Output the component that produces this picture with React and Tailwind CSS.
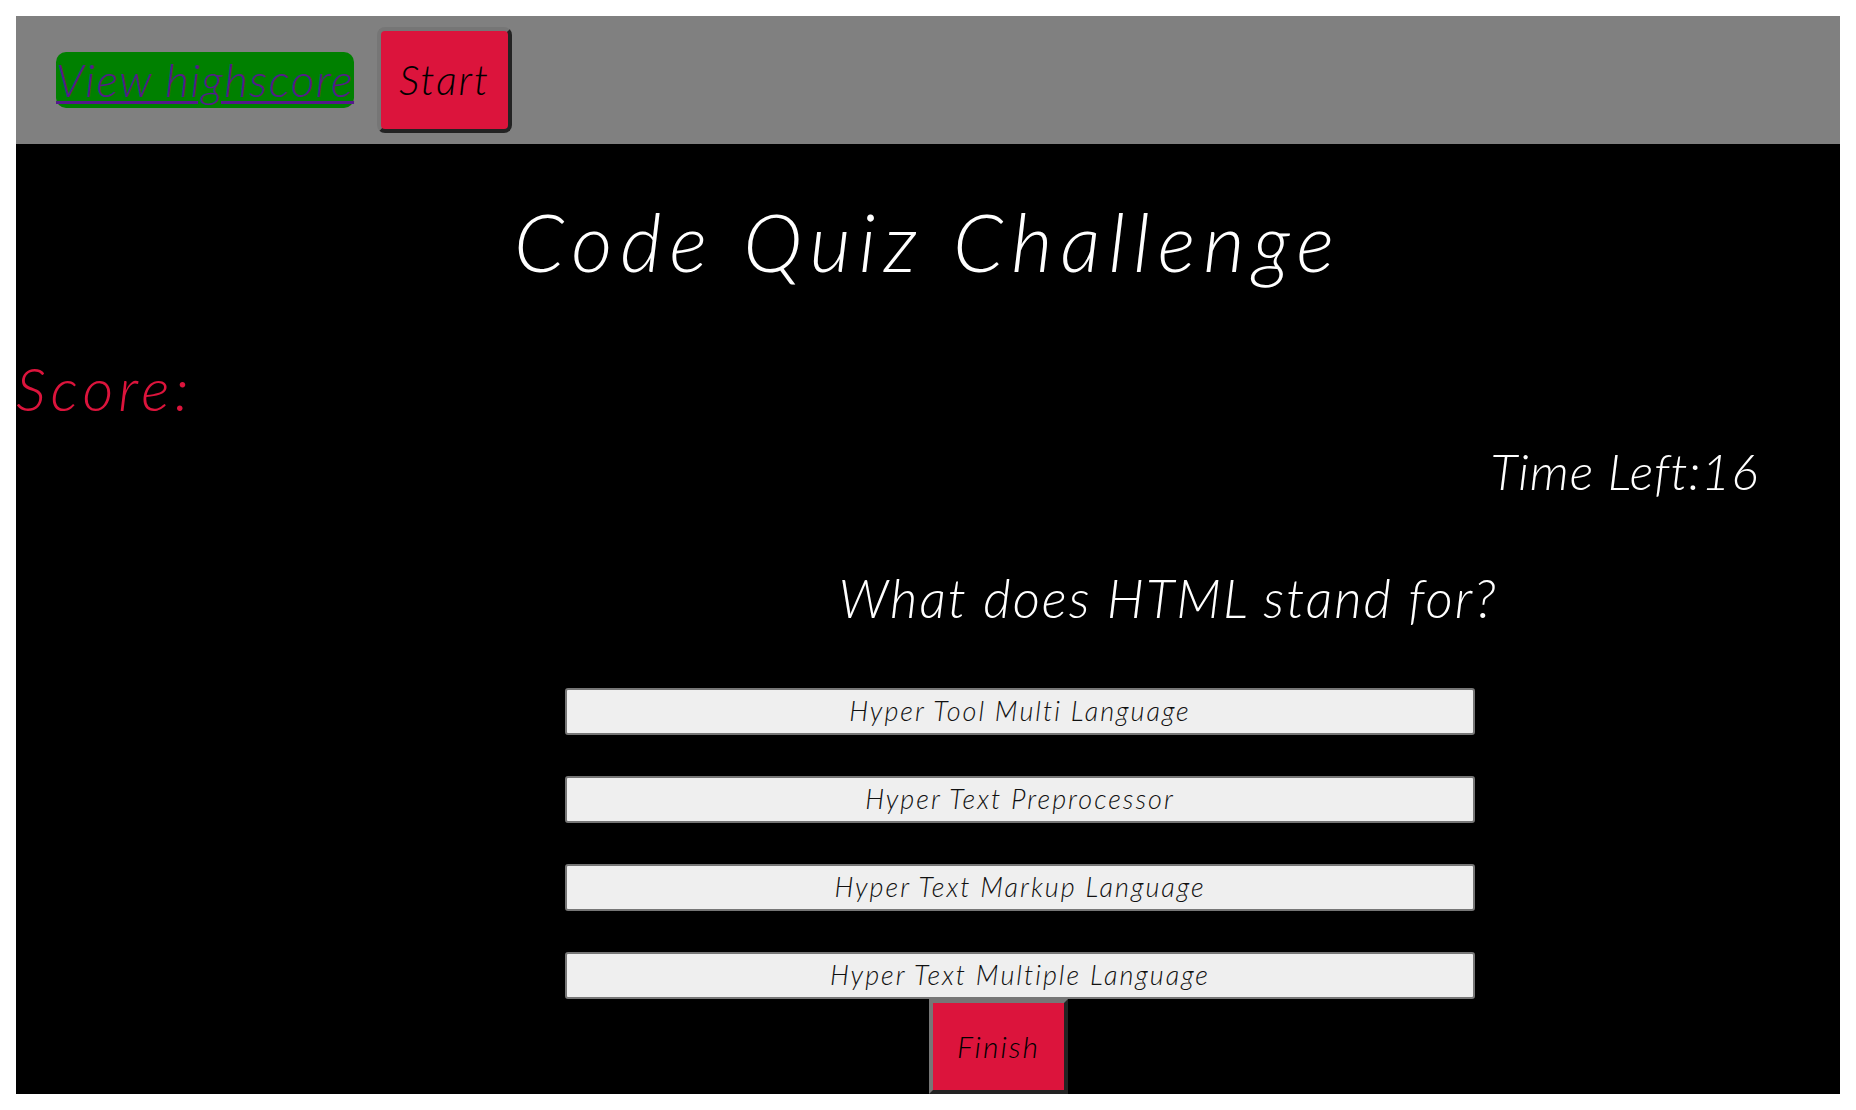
import { useState } from "react";

const answers = [
  "Hyper Tool Multi Language",
  "Hyper Text Preprocessor",
  "Hyper Text Markup Language",
  "Hyper Text Multiple Language",
];

function App() {
  const [timeLeft] = useState(16);

  return (
    <div className="bg-white p-4 font-['Lato',sans-serif] font-light italic">
      {/* Header bar */}
      <header className="h-[128px] bg-[#808080] flex items-center pl-10 gap-[23px]">
        <a
          href="#"
          className="h-[56px] w-[298px] flex items-center bg-[#008000] rounded-[10px] text-[#551a8b] underline decoration-[3px] underline-offset-[4px] text-[46px] leading-none tracking-[1.4px] whitespace-nowrap"
        >
          View highscore
        </a>
        <button className="w-[135px] h-[106px] bg-[#dc143c] rounded-[8px] border-4 border-t-[#767676] border-l-[#767676] border-r-[#232323] border-b-[#232323] text-[41px] tracking-[2px] text-black italic font-light">
          Start
        </button>
      </header>

      {/* Quiz area */}
      <main className="bg-black flex flex-col">
        <h1 className="mt-[57px] text-center text-white text-[80px] leading-[80px] tracking-[8px] font-light">
          Code Quiz Challenge
        </h1>

        <div className="mt-[77px] text-[#dc143c] text-[60px] leading-[60px] tracking-[5px]">Score:</div>

        <div className="mt-[28px] pr-[81px] text-right text-white text-[50px] leading-[50px] tracking-[1px]">
          Time Left:{timeLeft}
        </div>

        <h2 className="mt-[75px] pl-[480px] text-center text-white text-[53px] leading-[53px] tracking-[2px] font-light">
          What does HTML stand for?
        </h2>

        <div className="mt-[64px] ml-[549px] w-[910px] flex flex-col gap-[41px]">
          {answers.map((a) => (
            <button
              key={a}
              className="h-[47px] bg-[#efefef] border-2 border-[#767676] rounded-[3px] text-[27px] tracking-[2px] text-[#111] italic font-light"
            >
              {a}
            </button>
          ))}
        </div>

        <button className="ml-[913px] w-[139px] h-[95px] bg-[#dc143c] border-4 border-t-[#767676] border-l-[#767676] border-r-[#232323] border-b-[#232323] text-[30px] tracking-[2px] text-black italic font-light">
          Finish
        </button>
      </main>
    </div>
  );
}

export default App;
